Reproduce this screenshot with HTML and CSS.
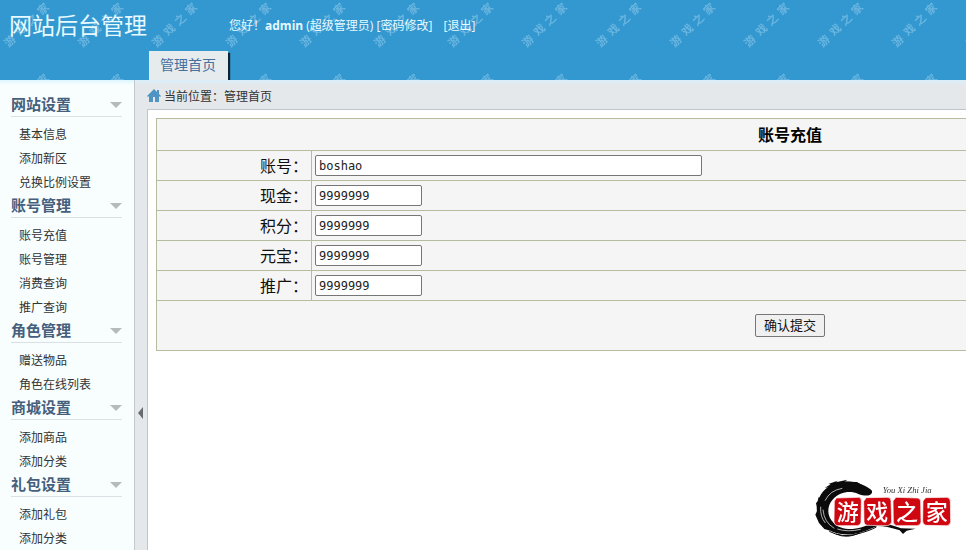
FILE: index.html
```html
<!DOCTYPE html>
<html lang="zh-CN">
<head>
    <meta charset="UTF-8">
    <meta name="viewport" content="width=device-width, initial-scale=1.0">
    <title>网站后台管理</title>
    <link rel="stylesheet" href="styles.css">
</head>
<body>
    <header class="header">
        <!-- Repeating watermark -->
        <svg class="header-mark" width="100%" height="100%" aria-hidden="true">
            <defs>
                <pattern id="mark" width="74" height="71" patternUnits="userSpaceOnUse">
                    <g transform="translate(10 41) rotate(-44)">
                        <text x="0" y="4">游</text>
                        <text x="16" y="4">戏</text>
                        <text x="31" y="4">之</text>
                        <text x="46" y="4">家</text>
                    </g>
                </pattern>
            </defs>
            <rect width="100%" height="100%" fill="url(#mark)"/>
        </svg>
        <div class="header-top">
            <h1 class="logo">网站后台管理</h1>
            <div class="user-info">
                <span>您好！<b>admin</b> (超级管理员)</span>
                <a href="#">[密码修改]</a>
                <a class="logout" href="#">[退出]</a>
            </div>
        </div>
        <nav class="tabs">
            <a class="tab" href="#">管理首页</a>
        </nav>
    </header>

    <div class="wrapper">
        <aside class="sidebar">
            <h3 class="menu-title">网站设置</h3>
            <ul class="menu">
                <li><a href="#">基本信息</a></li>
                <li><a href="#">添加新区</a></li>
                <li><a href="#">兑换比例设置</a></li>
            </ul>
            <h3 class="menu-title">账号管理</h3>
            <ul class="menu">
                <li><a href="#">账号充值</a></li>
                <li><a href="#">账号管理</a></li>
                <li><a href="#">消费查询</a></li>
                <li><a href="#">推广查询</a></li>
            </ul>
            <h3 class="menu-title">角色管理</h3>
            <ul class="menu">
                <li><a href="#">赠送物品</a></li>
                <li><a href="#">角色在线列表</a></li>
            </ul>
            <h3 class="menu-title">商城设置</h3>
            <ul class="menu">
                <li><a href="#">添加商品</a></li>
                <li><a href="#">添加分类</a></li>
            </ul>
            <h3 class="menu-title">礼包设置</h3>
            <ul class="menu">
                <li><a href="#">添加礼包</a></li>
                <li><a href="#">添加分类</a></li>
            </ul>
        </aside>

        <div class="splitter"><span class="splitter-arrow"></span></div>

        <main class="main">
            <div class="crumb">
                <svg class="home" width="14" height="13" viewBox="0 0 14 13" aria-hidden="true">
                    <path d="M7 0 L10 3 V1 H12 V5 L14 7 L13 8 L12 7 V13 H8 V8 H6 V13 H2 V7 L1 8 L0 7 Z" fill="#4f94c2"/>
                </svg>
                <span>当前位置：管理首页</span>
            </div>
            <div class="content">
                <form>
                    <table class="form-table">
                        <colgroup>
                            <col class="col-label">
                            <col>
                        </colgroup>
                        <tr class="row-title">
                            <th colspan="2">账号充值</th>
                        </tr>
                        <tr>
                            <td class="label"><label for="account">账号：</label></td>
                            <td><input class="text long" type="text" id="account" value="boshao"></td>
                        </tr>
                        <tr>
                            <td class="label"><label for="cash">现金：</label></td>
                            <td><input class="text" type="text" id="cash" value="9999999"></td>
                        </tr>
                        <tr>
                            <td class="label"><label for="points">积分：</label></td>
                            <td><input class="text" type="text" id="points" value="9999999"></td>
                        </tr>
                        <tr>
                            <td class="label"><label for="gold">元宝：</label></td>
                            <td><input class="text" type="text" id="gold" value="9999999"></td>
                        </tr>
                        <tr>
                            <td class="label"><label for="promo">推广：</label></td>
                            <td><input class="text" type="text" id="promo" value="9999999"></td>
                        </tr>
                        <tr class="row-submit">
                            <td colspan="2"><button class="submit" type="button">确认提交</button></td>
                        </tr>
                    </table>
                </form>
            </div>
        </main>
    </div>

    <!-- Brand stamp -->
    <svg class="stamp" width="140" height="62" viewBox="42 24 420 186">
        <g fill="#0b0b0b">
            <path d="M216 68 C211 80 192 78 175 72 C150 61 119 66 99 88 C79 110 81 139 101 159 C114 172 133 178 158 177 C184 176 204 163 228 157 C250 160 281 166 303 175 L347 176 L320 182 L309 192 L299 181 C279 174 252 168 232 168 C208 178 184 189 157 193 C126 196 96 189 76 172 C53 153 45 123 54 94 C62 65 86 44 116 37 C144 31 178 37 201 51 C211 57 218 61 216 68 Z"/>
            <path d="M61 88 L48 99 L52 121 L46 134 L57 159 L73 177 L91 182 L82 166 L66 148 Z"/>
            <path d="M74 54 L92 43 L85 42 L113 32 L108 37 L142 29 L134 35 L171 36 L187 46 L145 43 L105 47 Z"/>
        </g>
        <g fill="none" stroke="#0b0b0b" stroke-width="3">
            <path d="M88 184 Q126 204 168 193 T229 171"/>
            <path d="M108 192 Q142 207 178 189"/>
            <path d="M57 82 Q45 120 62 151"/>
        </g>
        <g fill="none" stroke="#fff" stroke-width="2">
            <path d="M75 92 Q90 61 127 55"/>
            <path d="M69 119 Q72 157 103 175"/>
            <path d="M62 110 Q60 140 76 159"/>
            <path d="M112 177 Q144 187 182 178"/>
        </g>
        <g fill="#cf0711" stroke="#fff" stroke-width="2">
            <path d="M109 84 L176 82 Q185 83 184 94 L183 157 Q181 167 172 167 L111 167 Q101 164 102 154 L103 94 Z"/>
            <path d="M199 83 L264 82 Q274 84 273 94 L275 155 Q273 166 262 167 L201 166 Q191 164 192 154 L191 94 Z"/>
            <path d="M288 82 L353 84 Q363 86 362 96 L363 156 Q362 167 350 167 L290 167 Q280 165 280 155 L279 93 Z"/>
            <path d="M377 83 L441 82 Q452 84 451 95 L452 155 Q451 166 440 167 L378 166 Q368 164 368 153 L369 93 Z"/>
        </g>
        <g class="stamp-text">
            <text x="143" y="149">游</text>
            <text x="232" y="149">戏</text>
            <text x="321" y="149">之</text>
            <text x="410" y="149">家</text>
        </g>
        <text class="stamp-sub" x="248" y="69">You Xi Zhi Jia</text>
    </svg>
</body>
</html>
```
FILE: styles.css
```css
* {
    box-sizing: border-box;
}

body {
    margin: 0;
    height: 100vh;
    display: flex;
    flex-direction: column;
    overflow: hidden;
    font-family: "Liberation Sans", "Noto Sans CJK SC", sans-serif;
    font-size: 12px;
    color: #333;
    background: #fff;
}

a {
    color: inherit;
    text-decoration: none;
}

/* Header */
.header {
    position: relative;
    height: 80px;
    flex: none;
    display: flex;
    flex-direction: column;
    justify-content: space-between;
    background: #3397d0;
}

.header-mark {
    position: absolute;
    top: 0;
    left: 0;
}

.header-mark text {
    font-family: "Noto Sans CJK SC", sans-serif;
    font-size: 11px;
    font-weight: bold;
    text-anchor: middle;
    fill: #a8dcf5;
    fill-opacity: 0.45;
}

.header-top {
    position: relative;
    display: flex;
    align-items: center;
    height: 51px;
    padding-left: 9px;
    color: #e6faff;
}

.logo {
    width: 220px;
    margin: 0;
    font-size: 23px;
    font-weight: normal;
    line-height: 54px;
}

.user-info {
    line-height: 52px;
    font-family: "Open Sans", "Noto Sans CJK SC", sans-serif;
}

.logout {
    margin-left: 8px;
}

.tabs {
    position: relative;
    display: flex;
    padding-left: 149px;
}

.tab {
    height: 29px;
    padding: 0 12px 0 11px;
    font-size: 14px;
    line-height: 29px;
    color: #456f9c;
    background: #e6ebee;
    box-shadow: 2px 2px 1px #123;
    clip-path: inset(0 -4px 0 0);
}

/* Layout */
.wrapper {
    flex: 1;
    display: flex;
    min-height: 0;
    background: linear-gradient(#d8effa, #e4e8eb 5px);
}

.sidebar {
    width: 135px;
    flex: none;
    padding: 13px 12px 0 11px;
    border-right: 1px solid #c3c9cd;
    background: linear-gradient(#dcf6ff, #f8fefe 5px);
}

.menu-title {
    display: flex;
    align-items: center;
    justify-content: space-between;
    height: 24px;
    margin: 0 0 5px;
    border-bottom: 1px solid #d9e1e4;
    font-size: 15px;
    line-height: 22px;
    color: #465f7c;
}

.menu-title::after {
    content: "";
    border: 6px solid transparent;
    border-top-color: #b5babc;
    border-bottom: 0;
}

.menu {
    margin: 0;
    padding: 0 0 0 8px;
    list-style: none;
    line-height: 24px;
    white-space: nowrap;
}

.menu a {
    display: block;
    height: 24px;
    line-height: 26px;
}

.splitter {
    width: 12px;
    flex: none;
    padding: 327px 0 0 3px;
}

.splitter-arrow {
    display: block;
    width: 0;
    border: 6px solid transparent;
    border-right: 5px solid #666c70;
    border-left: 0;
}

.main {
    flex: 1;
    min-width: 0;
    display: flex;
    flex-direction: column;
}

.crumb {
    display: flex;
    align-items: center;
    gap: 3px;
    height: 29px;
    padding-top: 2px;
}

.content {
    flex: 1;
    overflow: hidden;
    padding: 8px;
    border-top: 1px solid #bdc7cb;
    border-left: 1px solid #bdc7cb;
    background: #fff;
}

/* Form */
.form-table {
    width: 100%;
    min-width: 1268px;
    table-layout: fixed;
    border-collapse: collapse;
    background: #f5f5f5;
    color: #111;
    font-size: 16px;
    line-height: 20px;
}

.col-label {
    width: 155px;
}

.form-table tr {
    height: 30px;
}

.form-table .row-title {
    height: 32px;
}

.form-table .row-submit {
    height: 50px;
    text-align: center;
}

.form-table th,
.form-table td {
    padding: 0 3px;
    border: 1px solid #b4bd9f;
}

.form-table th {
    padding-top: 2px;
    color: #000;
}

.form-table .label {
    padding-top: 2px;
    text-align: right;
}

.text {
    display: block;
    width: 107px;
    height: 21px;
    padding: 0 3px;
    border: 1px solid #767676;
    border-radius: 2px;
    font-family: "DejaVu Sans Mono", monospace;
    font-size: 12px;
    color: #222;
    background: #fff;
}

.text.long {
    width: 387px;
}

.submit {
    height: 23px;
    padding: 0 8px;
    border: 1px solid #767676;
    border-radius: 2px;
    font-family: inherit;
    font-size: 13px;
    line-height: 20px;
    color: #111;
    background: #f0f0f0;
}

/* Stamp over the bottom right corner */
.stamp {
    position: fixed;
    right: 12px;
    bottom: 10px;
}

.stamp-text {
    font-family: "Noto Sans CJK SC", sans-serif;
    font-size: 66px;
    font-weight: 500;
    text-anchor: middle;
    fill: #fff;
}

.stamp-sub {
    font-family: "Liberation Serif", serif;
    font-size: 26px;
    font-style: italic;
    fill: #333;
}
```
